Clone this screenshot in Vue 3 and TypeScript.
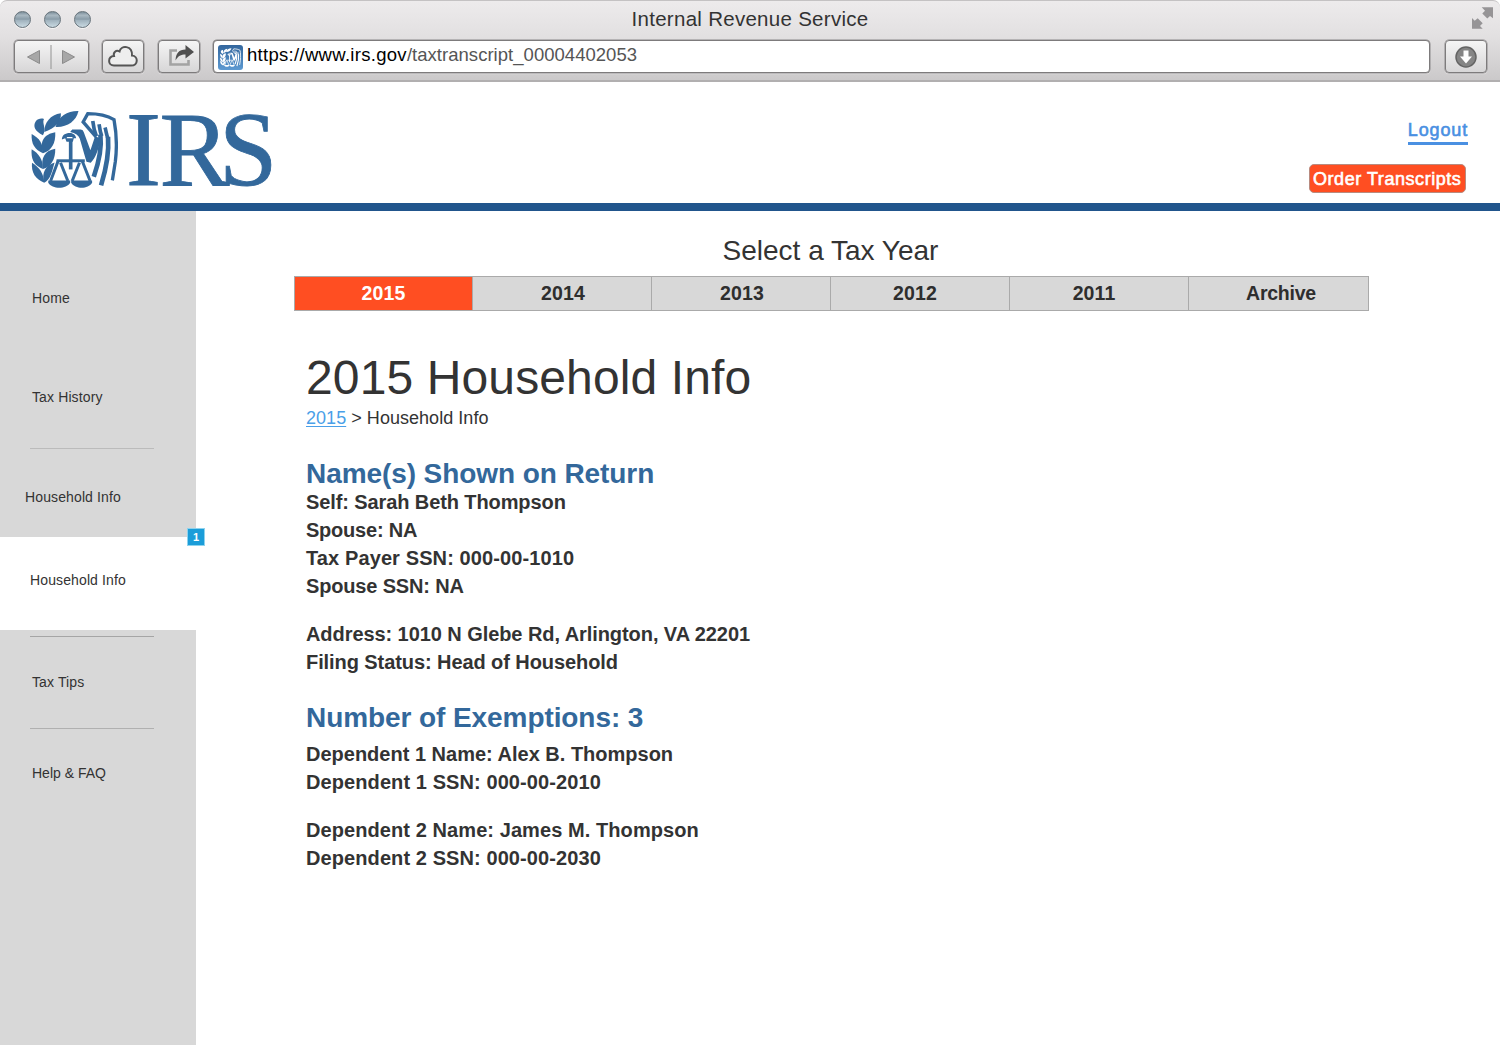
<script setup lang="ts">
interface NavEntry {
  key: string
  label: string
  badge?: number
  divider?: boolean
}

interface TaxYear {
  key: string
  label: string
}

interface Line {
  text: string
  tracking: number
}

const navEntries: NavEntry[] = [
  { key: 'home', label: 'Home' },
  { key: 'past', label: 'Tax History' },
  { key: 'rule-one', label: '', divider: true },
  { key: 'household', label: 'Household Info' },
  { key: 'active', label: 'Household Info', badge: 1 },
  { key: 'rule-two', label: '', divider: true },
  { key: 'tips', label: 'Tax Tips' },
  { key: 'rule-three', label: '', divider: true },
  { key: 'help', label: 'Help & FAQ' },
]

const taxYears: TaxYear[] = [
  { key: 'y2015', label: '2015' },
  { key: 'y2014', label: '2014' },
  { key: 'y2013', label: '2013' },
  { key: 'y2012', label: '2012' },
  { key: 'y2011', label: '2011' },
  { key: 'archive', label: 'Archive' },
]

const filers: Line[][] = [
  [
    { text: 'Self: Sarah Beth Thompson', tracking: -0.1 },
    { text: 'Spouse: NA', tracking: -0.22 },
    { text: 'Tax Payer SSN: 000-00-1010', tracking: 0.11 },
    { text: 'Spouse SSN: NA', tracking: -0.16 },
  ],
  [
    { text: 'Address: 1010 N Glebe Rd, Arlington, VA 22201', tracking: -0.07 },
    { text: 'Filing Status: Head of Household', tracking: -0.08 },
  ],
]

const dependents: Line[][] = [
  [
    { text: 'Dependent 1 Name: Alex B. Thompson', tracking: 0 },
    { text: 'Dependent 1 SSN: 000-00-2010', tracking: 0.09 },
  ],
  [
    { text: 'Dependent 2 Name: James M. Thompson', tracking: 0.08 },
    { text: 'Dependent 2 SSN: 000-00-2030', tracking: 0.09 },
  ],
]
</script>

<template>
  <div class="window">
    <svg class="defs" width="0" height="0" aria-hidden="true">
      <symbol id="emblem" viewBox="34 32 262 236">
        <g fill="currentColor">
          <path d="M74 97C74 70 92 45 124 41C126 66 106 88 74 97Z" />
          <path d="M108 82C116 50 145 33 177 34C170 65 142 84 108 82Z" />
          <path d="M70 107C46 96 39 80 48 66C54 56 66 56 73 58C66 72 82 86 70 107Z" />
          <path d="M70 161C46 150 34 134 36 103C60 116 70 130 70 161Z" />
          <path d="M70 161C58 127 74 103 107 98C109 130 96 154 70 161Z" />
          <path d="M70 209C44 199 33 180 36 149C58 162 70 180 70 209Z" />
          <path d="M70 209C62 176 76 153 107 148C108 180 94 203 70 209Z" />
          <path d="M74 250C48 240 34 220 37 190C59 203 72 222 74 250Z" />
          <path d="M74 250C64 219 80 197 105 189C98 212 94 240 74 250Z" />
          <path d="M127 120C127 106 137 100 151 100C162 100 169 107 170 116L163 116L160 127H141L137 116Z" />
          <path d="M152 97L158 90H184Q191 90 193 98L213 152L227 110L242 116C240 146 228 176 214 190L201 187L181 118Q176 102 152 97Z" />
          <path d="M148 120H159V210H148Z" />
          <path d="M86 243H152V250C140 270 98 270 86 250Z" />
          <path d="M155 243H218V250C206 270 167 270 155 250Z" />
        </g>
        <path class="cutouts" d="M143 112H158L160 116H141Z" />
        <g fill="none" stroke="currentColor">
          <path d="M116 184L93 245M123 190L145 245M180 190L158 245M188 184L212 245" stroke-width="9" />
          <path d="M111 184H196" stroke-width="9" />
          <path d="M230 112L191 67L205 42C237 42 264 48 284 60C291 98 294 138 288 186L279 243" stroke-width="10" />
          <path d="M220 64C222 82 223 90 231 110M239 74C241 88 242 96 247 110M257 84C260 94 261 104 266 118" stroke-width="11" />
          <path d="M243 105C247 141 238 190 223 232M266 112C269 151 261 206 245 258" stroke-width="14" />
        </g>
      </symbol>
    </svg>

    <header class="chrome">
      <div class="titlebar">
        <div class="lights"><i></i><i></i><i></i></div>
        <span class="title">Internal Revenue Service</span>
        <svg class="expand" width="24" height="24" viewBox="0 0 24 24">
          <g fill="#969496">
            <path d="M11.700 1.300H23V12.300L20 10L17.300 12.500L12.300 7.500L15 4.700Z" />
            <path d="M2 12V22.700H12.700L10 20L12.700 17.300L7.700 12.300L4.700 14.700Z" />
          </g>
        </svg>
      </div>
      <div class="toolbar">
        <span class="btn history">
          <svg width="73" height="31" viewBox="0 0 73 31">
            <path d="M12.500 16L24.500 9.500V22.500Z" fill="#a7a7a7" stroke="#8b8b8b" />
            <path d="M36 4V28" stroke="#929292" />
            <path d="M59.500 16L47.500 9.500V22.500Z" fill="#a7a7a7" stroke="#8b8b8b" />
          </svg>
        </span>
        <span class="btn cloud">
          <svg width="40" height="31" viewBox="0 0 40 31">
            <path d="M11 24.500H28C35.500 24.500 35.500 15 29 14.500C29.500 4.500 18 3.500 16.500 10.500C13 8.500 10 11.500 11 15C4.500 15.500 4.500 24.500 11 24.500Z" fill="#eee" stroke="#555" stroke-width="2" />
          </svg>
        </span>
        <span class="btn share">
          <svg width="40" height="31" viewBox="0 0 40 31">
            <path d="M18 9.500H11.500V23.500H29.500V19" fill="none" stroke="#a3a3a3" stroke-width="2.600" />
            <path d="M16.500 19.500C17 12 20 8.500 26.500 8.500V4L35 11L26.500 17.500V13.500C22 13.500 19 15 16.500 19.500Z" fill="#505050" />
          </svg>
        </span>
        <div class="address">
          <span class="favicon"><svg width="21" height="19"><use href="#emblem" /></svg></span>
          <span class="url"><b>https://www.irs.gov</b>/taxtranscript_00004402053</span>
        </div>
        <span class="btn download">
          <svg width="40" height="31" viewBox="0 0 40 31">
            <circle cx="20" cy="16" r="10" fill="#858585" stroke="#646464" stroke-width="1.500" />
            <path d="M17.500 9.500H22.500V15.500H26L20 22.500L14 15.500H17.500Z" fill="#fff" />
          </svg>
        </span>
      </div>
    </header>

    <div class="masthead">
      <div class="logo">
        <svg class="seal" width="87" height="79"><use href="#emblem" /></svg>
        <svg class="wordmark" width="190" height="100" viewBox="0 0 190 100">
          <text x="6 39.500 99" y="79">IRS</text>
        </svg>
      </div>
      <div class="actions">
        <a class="logout">Logout</a>
        <a class="order"><span>Order Transcripts</span></a>
      </div>
    </div>

    <div class="body">
      <nav class="sidebar">
        <div v-for="entry in navEntries" :key="entry.key" :class="[entry.divider ? 'rule' : 'entry', entry.key]">
          {{ entry.label }}<span v-if="entry.badge" class="badge">{{ entry.badge }}</span>
        </div>
      </nav>

      <main class="content">
        <div class="picker">Select a Tax Year</div>
        <div class="tabs">
          <div v-for="(year, i) in taxYears" :key="year.key" class="tab" :class="[year.key, { selected: i === 0 }]">
            <span>{{ year.label }}</span>
          </div>
        </div>
        <section class="details">
          <h1>2015 Household Info</h1>
          <p class="crumbs"><a>2015</a> &gt; Household Info</p>
          <h2>Name(s) Shown on Return</h2>
          <div v-for="(group, i) in filers" :key="i" class="group">
            <div v-for="line in group" :key="line.text" :style="{ letterSpacing: line.tracking + 'px' }">{{ line.text }}</div>
          </div>
          <h2 class="exemptions">Number of Exemptions: 3</h2>
          <div v-for="(group, i) in dependents" :key="i" class="group">
            <div v-for="line in group" :key="line.text" :style="{ letterSpacing: line.tracking + 'px' }">{{ line.text }}</div>
          </div>
        </section>
      </main>
    </div>
  </div>
</template>

<style>
body {
  background: #fff;
}
</style>

<style scoped>
.window {
  width: 1500px;
  height: 1045px;
  overflow: hidden;
  display: flex;
  flex-direction: column;
  background: #fff;
  color: #333;
  font-family: "Liberation Sans", Arial, sans-serif;
}
.defs {
  position: absolute;
}
.cutouts {
  fill: var(--cutout, #fff);
}
.chrome {
  box-sizing: border-box;
  flex: none;
  height: 82px;
  background: linear-gradient(#edebec, #e2e0e1 45%, #cbc9ca);
  border-top: 1px solid #c4c2c3;
  border-bottom: 2px solid #b1afb0;
  border-radius: 7px 7px 0 0;
}
.titlebar {
  height: 39px;
  display: flex;
  justify-content: space-between;
}
.lights {
  display: flex;
  gap: 13px;
  padding: 10px 0 0 14px;
  width: 86px;
}
.lights i {
  box-sizing: border-box;
  width: 17px;
  height: 17px;
  border: 1px solid #66727a;
  border-radius: 50%;
  background: linear-gradient(#7b8e9a, #a9b8c1 22%, #899ca8 48%, #a0b2bd 55%, #c9dae2);
  box-shadow: 0 1px 0 #f7f7f7;
}
.title {
  font-size: 20.500px;
  line-height: 36px;
  letter-spacing: 0.28px;
}
.expand {
  margin: 5px 6px 0 70px;
}
.toolbar {
  display: flex;
}
.btn,
.address {
  box-sizing: border-box;
  height: 33px;
  border: 1px solid #7d7b7c;
  border-radius: 4px;
  box-shadow: 0 0 0 0.5px #8a8889, 0 1px 1px #f3f1f2;
}
.btn {
  background: linear-gradient(#f5f5f5, #d7d6d7);
}
.btn svg {
  display: block;
}
.history {
  width: 75px;
  margin-left: 14px;
}
.cloud {
  width: 42px;
  margin-left: 13px;
}
.share {
  width: 42px;
  margin-left: 14px;
}
.download {
  width: 42px;
  margin-left: 15px;
}
.address {
  width: 1217px;
  margin-left: 13px;
  background: #fff;
  display: flex;
}
.favicon {
  --cutout: #4179b1;
  width: 25px;
  height: 25px;
  margin: 4px 0 0 4px;
  border-radius: 3px;
  background: linear-gradient(#33669d, #5d9ad2);
  color: #fff;
  display: flex;
  align-items: center;
  justify-content: center;
}
.url {
  margin-left: 4px;
  font-size: 18.500px;
  line-height: 28px;
  letter-spacing: 0.03px;
  color: #555;
}
.url b {
  font-weight: 400;
  letter-spacing: 0.3px;
  color: #000;
}
.masthead {
  box-sizing: border-box;
  flex: none;
  height: 129px;
  border-bottom: 8px solid #21558c;
  display: flex;
  justify-content: space-between;
}
.logo {
  display: flex;
  color: #33689b;
}
.seal {
  margin: 28px 0 0 31px;
}
.wordmark {
  margin: 24px 0 -20px 2px;
  overflow: visible;
}
.wordmark text {
  font-family: "Liberation Serif", "Times New Roman", serif;
  font-size: 105px;
  fill: #33689b;
  stroke: #33689b;
  stroke-width: 0.8px;
}
.actions {
  display: flex;
  flex-direction: column;
  align-items: flex-end;
  padding: 36px 32px 0 0;
}
.logout {
  height: 24px;
  border-bottom: 3px solid #4a90e2;
  color: #4a90e2;
  font-size: 18px;
  line-height: 24px;
  letter-spacing: 0.85px;
  -webkit-text-stroke: 0.6px;
}
.order {
  box-sizing: border-box;
  width: 157px;
  height: 29px;
  margin: 19px 2px 0 0;
  padding-left: 3px;
  border: 1px solid #b88b80;
  border-radius: 5px;
  background: #ff4e22;
  color: #fff;
  font-size: 18px;
  line-height: 28px;
  letter-spacing: 0.55px;
  white-space: nowrap;
  -webkit-text-stroke: 0.6px;
}
.body {
  flex: 1;
  display: flex;
}
.sidebar {
  width: 196px;
  background: #d8d8d8;
}
.entry {
  height: 20px;
  padding-left: 32px;
  font-size: 14px;
  line-height: 20px;
  letter-spacing: 0.12px;
}
.rule {
  width: 124px;
  height: 1px;
  margin-left: 30px;
  background: #b0b0b0;
}
.home {
  margin-top: 77px;
}
.past {
  margin-top: 79px;
}
.rule-one {
  margin-top: 41px;
  background: #bbb;
}
.household {
  margin-top: 38px;
  padding-left: 25px;
}
.active {
  position: relative;
  box-sizing: border-box;
  height: 93px;
  margin-top: 30px;
  padding: 33px 0 0 30px;
  background: #fff;
}
.badge {
  position: absolute;
  top: -9px;
  right: -9px;
  box-sizing: border-box;
  width: 18px;
  height: 18px;
  border: 1px solid #8fd3ee;
  background: #1b9dd9;
  color: #fff;
  font-size: 11px;
  font-weight: 700;
  line-height: 16px;
  text-align: center;
}
.rule-two {
  margin-top: 6px;
  background: #a5a5a5;
}
.tips {
  margin-top: 35px;
}
.rule-three {
  margin-top: 36px;
}
.help {
  margin-top: 34px;
  letter-spacing: 0;
}
.content {
  width: 1075px;
  margin-left: 98px;
  padding-top: 22px;
}
.picker {
  height: 43px;
  padding-right: 2px;
  font-size: 28px;
  line-height: 36px;
  text-align: center;
}
.tabs {
  box-sizing: border-box;
  height: 35px;
  border: 1px solid #aaa;
  display: flex;
  background: #d8d8d8;
}
.tab {
  box-sizing: border-box;
  flex: none;
  width: 179px;
  border-left: 1px solid #aaa;
  color: #2e2e2e;
  font-size: 19.500px;
  font-weight: 700;
  line-height: 33px;
  letter-spacing: 0.1px;
  text-align: center;
}
.tab:first-child {
  width: 177px;
  border-left: 0;
}
.tab.y2014,
.tab.y2013 {
  padding-left: 2px;
}
.selected {
  background: #ff4e22;
  color: #fff;
}
.y2012,
.y2011 {
  padding-right: 10px;
}
.archive {
  padding-left: 6px;
  letter-spacing: -0.25px;
}
.details {
  margin: 40px 0 0 12px;
}
h1 {
  margin: 0;
  font-size: 48px;
  font-weight: 400;
  line-height: 54px;
  letter-spacing: 0.12px;
}
.crumbs {
  margin: 0 0 26px;
  font-size: 18px;
  line-height: 27px;
  letter-spacing: 0.04px;
}
.crumbs a {
  color: #4a9fe8;
  text-decoration: underline;
  text-decoration-thickness: 1px;
  text-underline-offset: 2px;
}
h2 {
  margin: 0;
  color: #33689b;
  font-size: 28px;
  font-weight: 700;
  line-height: 31px;
  height: 30px;
  letter-spacing: -0.08px;
}
h2.exemptions {
  margin: 26px 0 8px;
}
.group {
  font-size: 20px;
  font-weight: 700;
  line-height: 28px;
}
.group + .group {
  margin-top: 20px;
}
</style>
